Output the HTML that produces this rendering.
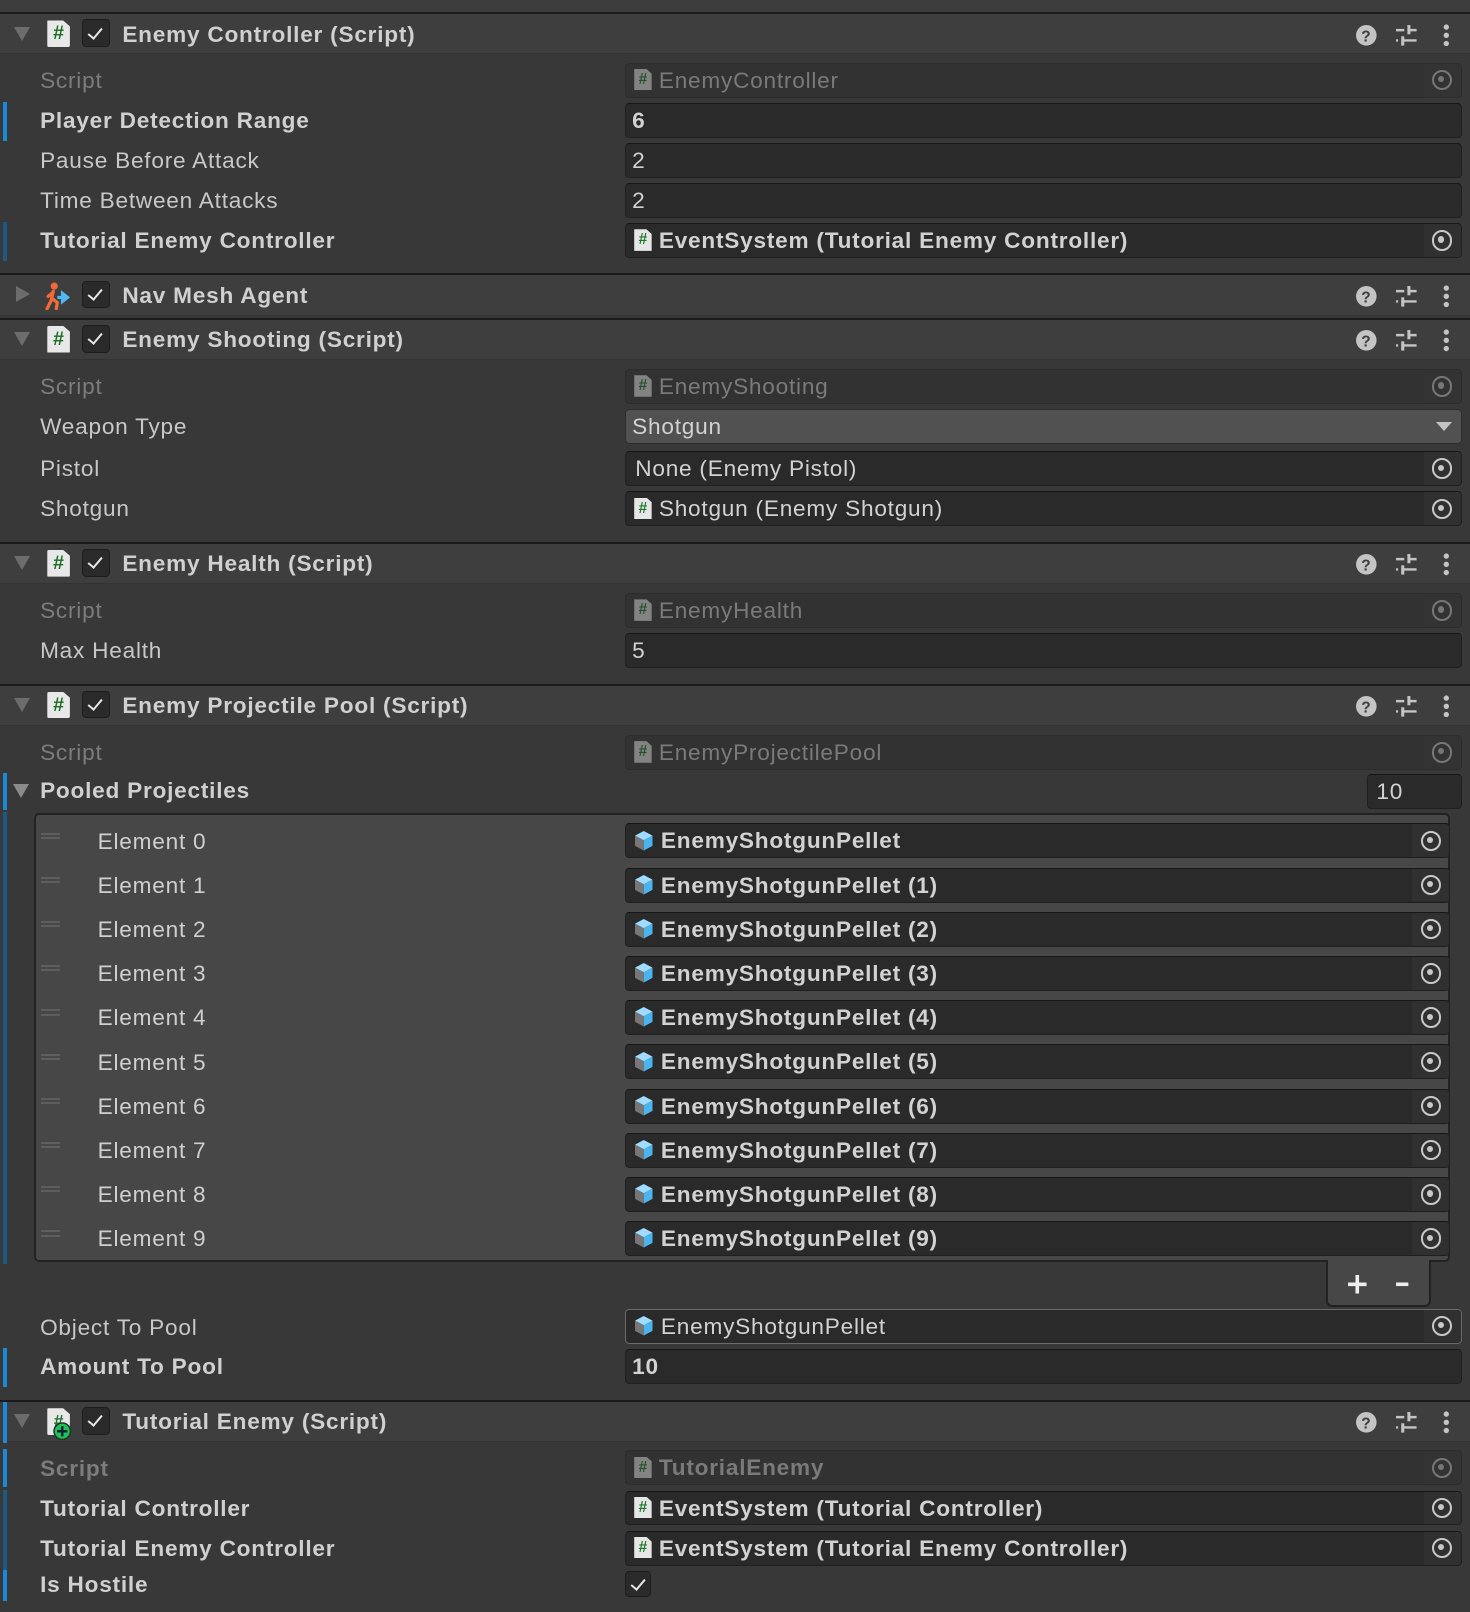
<!DOCTYPE html>
<html><head><meta charset="utf-8">
<style>
*{margin:0;padding:0;box-sizing:border-box}
html,body{width:1470px;height:1612px;overflow:hidden;background:#383838}
#w{zoom:1.02797;position:relative;width:1430px;height:1568px;background:#383838;font-family:"Liberation Sans",sans-serif;font-size:22px;color:#c8c8c8;letter-spacing:0.75px}
.top{position:absolute;left:0;top:0;width:1430px;height:12px;background:#3c3c3c}
.hdr{position:absolute;left:0;width:1430px;height:41px;background:#3e3e3e;border-top:2px solid #1b1b1b;border-bottom:1px solid #333}
.hdr .t{position:absolute;left:119px;top:7px;font-weight:bold;color:#d0d0d0;line-height:26px}
.hdr .tri{position:absolute;left:14px;top:12px;width:0;height:0;border-left:8px solid transparent;border-right:8px solid transparent;border-top:14px solid #6c6c6c}
.hdr .tri.r{left:16px;top:10px;border-top:8px solid transparent;border-bottom:8px solid transparent;border-left:14px solid #6c6c6c;border-right:0}
.hdr .ico{position:absolute;left:46px;top:6px;width:22px;height:26px;background:#e8e8e8;clip-path:polygon(0 0,70% 0,100% 22%,100% 100%,0 100%);color:#1b6e25;font-weight:bold;font-size:19px;text-align:center;line-height:27px;border-radius:2px;letter-spacing:0}
.cb{position:absolute;left:80px;top:5px;width:27px;height:27px;background:#2a2a2a;border:1px solid #1c1c1c;border-radius:4px}
.cb:after{content:"";position:absolute;left:8px;top:4px;width:6px;height:12px;border-right:2.5px solid #e6e6e6;border-bottom:2.5px solid #e6e6e6;transform:rotate(40deg)}
.hi{position:absolute;top:9px}
.l{position:absolute;left:39px;height:26px;line-height:28px;white-space:nowrap}
.l.b{font-weight:bold;color:#d0d0d0}
.l.d{color:#7c7c7c}
.bar{position:absolute;left:3px;width:4px;background:#1a8ad8}
.bar.dk{background:#1c5a86}
.f{position:absolute;left:608px;width:814px;height:34px;background:#2a2a2a;border:1px solid #1f1f1f;border-top-color:#171717;border-radius:4px;line-height:33px;padding-left:6px;color:#d2d2d2;white-space:nowrap;overflow:hidden}
.f.dis{background:#323232;border-color:#2c2c2c;color:#7a7a7a}
.f.nb{font-weight:bold}
.f.dd{background:#515151;border-color:#2d2d2d}
.f.dd:after{content:"";position:absolute;right:9px;top:12px;border-left:8px solid transparent;border-right:8px solid transparent;border-top:9px solid #c4c4c4}
.hs{display:inline-block;vertical-align:middle;width:17px;height:21px;margin:-4px 7px 0 2px;background:#e6e6e6;color:#1d7a28;font-style:normal;font-weight:bold;font-size:15px;line-height:22px;text-align:center;letter-spacing:0;clip-path:polygon(0 0,70% 0,100% 22%,100% 100%,0 100%)}
.dis .hs{opacity:.45}
.cube{display:inline-block;vertical-align:middle;margin:-4px 7px 0 2px;width:19px;height:21px}
.tg{position:absolute;right:0;top:0;width:36px;height:32px;background:#303030}
.tg:before{content:"";position:absolute;left:8px;top:6px;width:16px;height:16px;border:2px solid #c8c8c8;border-radius:50%}
.tg:after{content:"";position:absolute;left:14px;top:12px;width:6px;height:6px;background:#c8c8c8;border-radius:50%}
.dis .tg{background:#333}
.dis .tg:before{border-color:#777}.dis .tg:after{background:#777}
.list{position:absolute;left:33px;top:791px;width:1378px;height:437px;background:#474747;border:2px solid #222;border-radius:5px}
.foot{position:absolute;left:1290px;top:1226px;width:102px;height:45px;background:#474747;border:2px solid #222;border-top:none;border-radius:0 0 6px 6px}
.el{position:absolute;left:95px;height:26px;line-height:28px;color:#cfcfcf}
.grip{position:absolute;left:40px;width:18px;height:6px;border-top:2px solid #5e5e5e;border-bottom:2px solid #5e5e5e}
.ef{left:608px;width:803px}
</style></head><body><div id="w">
<div class="top"></div>

<div class="hdr" style="top:12px"><div class="tri"></div><div class="ico">#</div><div class="cb"></div><div class="t">Enemy Controller (Script)</div>
<svg class="hi" style="left:1318px" width="22" height="22" viewBox="0 0 22 22"><circle cx="11" cy="11" r="10" fill="#c4c4c4"/><text x="11" y="17" text-anchor="middle" font-family="Liberation Sans" font-weight="bold" font-size="15" fill="#3e3e3e">?</text></svg>
<svg class="hi" style="left:1357px" width="22" height="22" viewBox="0 0 22 22"><path d="M1 6h20M1 16h20" stroke="#c4c4c4" stroke-width="2.4"/><rect x="12" y="1" width="3" height="9" fill="#c4c4c4"/><rect x="6" y="12" width="3" height="9" fill="#c4c4c4"/><rect x="9" y="3" width="3" height="6" fill="#3e3e3e"/><rect x="3" y="13" width="3" height="5" fill="#3e3e3e"/></svg>
<svg class="hi" style="left:1396px" width="22" height="22" viewBox="0 0 22 22"><circle cx="11" cy="3" r="2.6" fill="#c4c4c4"/><circle cx="11" cy="11" r="2.6" fill="#c4c4c4"/><circle cx="11" cy="19" r="2.6" fill="#c4c4c4"/></svg></div>

<div class="l d" style="top:65px">Script</div><div class="f dis" style="top:61px"><i class="hs">#</i>EnemyController<b class="tg"></b></div>
<div class="bar" style="top:99px;height:38px"></div>
<div class="l b" style="top:104px">Player Detection Range</div><div class="f nb" style="top:100px">6</div>
<div class="l" style="top:143px">Pause Before Attack</div><div class="f" style="top:139px">2</div>
<div class="l" style="top:182px">Time Between Attacks</div><div class="f" style="top:178px">2</div>
<div class="bar dk" style="top:216px;height:38px"></div>
<div class="l b" style="top:221px">Tutorial Enemy Controller</div><div class="f nb" style="top:217px"><i class="hs">#</i>EventSystem (Tutorial Enemy Controller)<b class="tg"></b></div>

<div class="hdr" style="top:266px"><div class="tri r"></div>
<svg style="position:absolute;left:44px;top:6px" width="26" height="28" viewBox="0 0 26 28"><circle cx="9" cy="4" r="3.5" fill="#f06a3a"/><path d="M8 9 L6 18 L2 26 M7 16 L12 20 L11 26 M8 10 L3 14" stroke="#f06a3a" stroke-width="3.2" fill="none" stroke-linecap="round"/><path d="M12 15h8M17 11l5 4-5 4z" stroke="#4fb8f0" stroke-width="3" fill="#4fb8f0"/></svg>
<div class="cb"></div><div class="t">Nav Mesh Agent</div>
<svg class="hi" style="left:1318px" width="22" height="22" viewBox="0 0 22 22"><circle cx="11" cy="11" r="10" fill="#c4c4c4"/><text x="11" y="17" text-anchor="middle" font-family="Liberation Sans" font-weight="bold" font-size="15" fill="#3e3e3e">?</text></svg>
<svg class="hi" style="left:1357px" width="22" height="22" viewBox="0 0 22 22"><path d="M1 6h20M1 16h20" stroke="#c4c4c4" stroke-width="2.4"/><rect x="12" y="1" width="3" height="9" fill="#c4c4c4"/><rect x="6" y="12" width="3" height="9" fill="#c4c4c4"/><rect x="9" y="3" width="3" height="6" fill="#3e3e3e"/><rect x="3" y="13" width="3" height="5" fill="#3e3e3e"/></svg>
<svg class="hi" style="left:1396px" width="22" height="22" viewBox="0 0 22 22"><circle cx="11" cy="3" r="2.6" fill="#c4c4c4"/><circle cx="11" cy="11" r="2.6" fill="#c4c4c4"/><circle cx="11" cy="19" r="2.6" fill="#c4c4c4"/></svg></div>

<div class="hdr" style="top:309px"><div class="tri"></div><div class="ico">#</div><div class="cb"></div><div class="t">Enemy Shooting (Script)</div>
<svg class="hi" style="left:1318px" width="22" height="22" viewBox="0 0 22 22"><circle cx="11" cy="11" r="10" fill="#c4c4c4"/><text x="11" y="17" text-anchor="middle" font-family="Liberation Sans" font-weight="bold" font-size="15" fill="#3e3e3e">?</text></svg>
<svg class="hi" style="left:1357px" width="22" height="22" viewBox="0 0 22 22"><path d="M1 6h20M1 16h20" stroke="#c4c4c4" stroke-width="2.4"/><rect x="12" y="1" width="3" height="9" fill="#c4c4c4"/><rect x="6" y="12" width="3" height="9" fill="#c4c4c4"/><rect x="9" y="3" width="3" height="6" fill="#3e3e3e"/><rect x="3" y="13" width="3" height="5" fill="#3e3e3e"/></svg>
<svg class="hi" style="left:1396px" width="22" height="22" viewBox="0 0 22 22"><circle cx="11" cy="3" r="2.6" fill="#c4c4c4"/><circle cx="11" cy="11" r="2.6" fill="#c4c4c4"/><circle cx="11" cy="19" r="2.6" fill="#c4c4c4"/></svg></div>

<div class="l d" style="top:363px">Script</div><div class="f dis" style="top:359px"><i class="hs">#</i>EnemyShooting<b class="tg"></b></div>
<div class="l" style="top:402px">Weapon Type</div><div class="f dd" style="top:398px">Shotgun</div>
<div class="l" style="top:443px">Pistol</div><div class="f" style="top:439px;padding-left:9px">None (Enemy Pistol)<b class="tg"></b></div>
<div class="l" style="top:482px">Shotgun</div><div class="f" style="top:478px"><i class="hs">#</i>Shotgun (Enemy Shotgun)<b class="tg"></b></div>

<div class="hdr" style="top:527px"><div class="tri"></div><div class="ico">#</div><div class="cb"></div><div class="t">Enemy Health (Script)</div>
<svg class="hi" style="left:1318px" width="22" height="22" viewBox="0 0 22 22"><circle cx="11" cy="11" r="10" fill="#c4c4c4"/><text x="11" y="17" text-anchor="middle" font-family="Liberation Sans" font-weight="bold" font-size="15" fill="#3e3e3e">?</text></svg>
<svg class="hi" style="left:1357px" width="22" height="22" viewBox="0 0 22 22"><path d="M1 6h20M1 16h20" stroke="#c4c4c4" stroke-width="2.4"/><rect x="12" y="1" width="3" height="9" fill="#c4c4c4"/><rect x="6" y="12" width="3" height="9" fill="#c4c4c4"/><rect x="9" y="3" width="3" height="6" fill="#3e3e3e"/><rect x="3" y="13" width="3" height="5" fill="#3e3e3e"/></svg>
<svg class="hi" style="left:1396px" width="22" height="22" viewBox="0 0 22 22"><circle cx="11" cy="3" r="2.6" fill="#c4c4c4"/><circle cx="11" cy="11" r="2.6" fill="#c4c4c4"/><circle cx="11" cy="19" r="2.6" fill="#c4c4c4"/></svg></div>

<div class="l d" style="top:581px">Script</div><div class="f dis" style="top:577px"><i class="hs">#</i>EnemyHealth<b class="tg"></b></div>
<div class="l" style="top:620px">Max Health</div><div class="f" style="top:616px">5</div>

<div class="hdr" style="top:665px"><div class="tri"></div><div class="ico">#</div><div class="cb"></div><div class="t">Enemy Projectile Pool (Script)</div>
<svg class="hi" style="left:1318px" width="22" height="22" viewBox="0 0 22 22"><circle cx="11" cy="11" r="10" fill="#c4c4c4"/><text x="11" y="17" text-anchor="middle" font-family="Liberation Sans" font-weight="bold" font-size="15" fill="#3e3e3e">?</text></svg>
<svg class="hi" style="left:1357px" width="22" height="22" viewBox="0 0 22 22"><path d="M1 6h20M1 16h20" stroke="#c4c4c4" stroke-width="2.4"/><rect x="12" y="1" width="3" height="9" fill="#c4c4c4"/><rect x="6" y="12" width="3" height="9" fill="#c4c4c4"/><rect x="9" y="3" width="3" height="6" fill="#3e3e3e"/><rect x="3" y="13" width="3" height="5" fill="#3e3e3e"/></svg>
<svg class="hi" style="left:1396px" width="22" height="22" viewBox="0 0 22 22"><circle cx="11" cy="3" r="2.6" fill="#c4c4c4"/><circle cx="11" cy="11" r="2.6" fill="#c4c4c4"/><circle cx="11" cy="19" r="2.6" fill="#c4c4c4"/></svg></div>

<div class="l d" style="top:719px">Script</div><div class="f dis" style="top:715px"><i class="hs">#</i>EnemyProjectilePool<b class="tg"></b></div>
<div class="bar" style="top:752px;height:36px"></div>
<div style="position:absolute;left:13px;top:763px;border-left:8px solid transparent;border-right:8px solid transparent;border-top:14px solid #8a8a8a"></div>
<div class="l b" style="top:756px">Pooled Projectiles</div>
<div class="f" style="top:753px;left:1330px;width:92px;padding-left:8px">10</div>
<div class="bar dk" style="top:790px;height:440px"></div>
<div class="list"></div>

<div class="grip" style="top:810px"></div><div class="el" style="top:805px">Element 0</div>
<div class="f nb ef" style="top:801px"><svg class="cube" viewBox="0 0 19 21"><path d="M9.5 1L18 5.5 9.5 10 1 5.5z" fill="#9fdcff"/><path d="M1 5.5L9.5 10V20L1 15.5z" fill="#777"/><path d="M18 5.5V15.5L9.5 20V10z" fill="#4cb4ec"/></svg>EnemyShotgunPellet<b class="tg"></b></div>
<div class="grip" style="top:853px"></div><div class="el" style="top:848px">Element 1</div>
<div class="f nb ef" style="top:844px"><svg class="cube" viewBox="0 0 19 21"><path d="M9.5 1L18 5.5 9.5 10 1 5.5z" fill="#9fdcff"/><path d="M1 5.5L9.5 10V20L1 15.5z" fill="#777"/><path d="M18 5.5V15.5L9.5 20V10z" fill="#4cb4ec"/></svg>EnemyShotgunPellet (1)<b class="tg"></b></div>
<div class="grip" style="top:896px"></div><div class="el" style="top:891px">Element 2</div>
<div class="f nb ef" style="top:887px"><svg class="cube" viewBox="0 0 19 21"><path d="M9.5 1L18 5.5 9.5 10 1 5.5z" fill="#9fdcff"/><path d="M1 5.5L9.5 10V20L1 15.5z" fill="#777"/><path d="M18 5.5V15.5L9.5 20V10z" fill="#4cb4ec"/></svg>EnemyShotgunPellet (2)<b class="tg"></b></div>
<div class="grip" style="top:939px"></div><div class="el" style="top:934px">Element 3</div>
<div class="f nb ef" style="top:930px"><svg class="cube" viewBox="0 0 19 21"><path d="M9.5 1L18 5.5 9.5 10 1 5.5z" fill="#9fdcff"/><path d="M1 5.5L9.5 10V20L1 15.5z" fill="#777"/><path d="M18 5.5V15.5L9.5 20V10z" fill="#4cb4ec"/></svg>EnemyShotgunPellet (3)<b class="tg"></b></div>
<div class="grip" style="top:982px"></div><div class="el" style="top:977px">Element 4</div>
<div class="f nb ef" style="top:973px"><svg class="cube" viewBox="0 0 19 21"><path d="M9.5 1L18 5.5 9.5 10 1 5.5z" fill="#9fdcff"/><path d="M1 5.5L9.5 10V20L1 15.5z" fill="#777"/><path d="M18 5.5V15.5L9.5 20V10z" fill="#4cb4ec"/></svg>EnemyShotgunPellet (4)<b class="tg"></b></div>
<div class="grip" style="top:1025px"></div><div class="el" style="top:1020px">Element 5</div>
<div class="f nb ef" style="top:1016px"><svg class="cube" viewBox="0 0 19 21"><path d="M9.5 1L18 5.5 9.5 10 1 5.5z" fill="#9fdcff"/><path d="M1 5.5L9.5 10V20L1 15.5z" fill="#777"/><path d="M18 5.5V15.5L9.5 20V10z" fill="#4cb4ec"/></svg>EnemyShotgunPellet (5)<b class="tg"></b></div>
<div class="grip" style="top:1068px"></div><div class="el" style="top:1063px">Element 6</div>
<div class="f nb ef" style="top:1059px"><svg class="cube" viewBox="0 0 19 21"><path d="M9.5 1L18 5.5 9.5 10 1 5.5z" fill="#9fdcff"/><path d="M1 5.5L9.5 10V20L1 15.5z" fill="#777"/><path d="M18 5.5V15.5L9.5 20V10z" fill="#4cb4ec"/></svg>EnemyShotgunPellet (6)<b class="tg"></b></div>
<div class="grip" style="top:1111px"></div><div class="el" style="top:1106px">Element 7</div>
<div class="f nb ef" style="top:1102px"><svg class="cube" viewBox="0 0 19 21"><path d="M9.5 1L18 5.5 9.5 10 1 5.5z" fill="#9fdcff"/><path d="M1 5.5L9.5 10V20L1 15.5z" fill="#777"/><path d="M18 5.5V15.5L9.5 20V10z" fill="#4cb4ec"/></svg>EnemyShotgunPellet (7)<b class="tg"></b></div>
<div class="grip" style="top:1154px"></div><div class="el" style="top:1149px">Element 8</div>
<div class="f nb ef" style="top:1145px"><svg class="cube" viewBox="0 0 19 21"><path d="M9.5 1L18 5.5 9.5 10 1 5.5z" fill="#9fdcff"/><path d="M1 5.5L9.5 10V20L1 15.5z" fill="#777"/><path d="M18 5.5V15.5L9.5 20V10z" fill="#4cb4ec"/></svg>EnemyShotgunPellet (8)<b class="tg"></b></div>
<div class="grip" style="top:1197px"></div><div class="el" style="top:1192px">Element 9</div>
<div class="f nb ef" style="top:1188px"><svg class="cube" viewBox="0 0 19 21"><path d="M9.5 1L18 5.5 9.5 10 1 5.5z" fill="#9fdcff"/><path d="M1 5.5L9.5 10V20L1 15.5z" fill="#777"/><path d="M18 5.5V15.5L9.5 20V10z" fill="#4cb4ec"/></svg>EnemyShotgunPellet (9)<b class="tg"></b></div>

<div class="foot"><svg style="position:absolute;left:18px;top:13px" width="20" height="20" viewBox="0 0 20 20"><path d="M10 1v18M1 10h18" stroke="#eee" stroke-width="3.5"/></svg><svg style="position:absolute;left:64px;top:13px" width="16" height="20" viewBox="0 0 16 20"><path d="M2 10h12" stroke="#eee" stroke-width="3.5"/></svg></div>

<div class="l" style="top:1278px">Object To Pool</div>
<div class="f" style="top:1273px;border-color:#6a6a6a"><svg class="cube" viewBox="0 0 19 21"><path d="M9.5 1L18 5.5 9.5 10 1 5.5z" fill="#9fdcff"/><path d="M1 5.5L9.5 10V20L1 15.5z" fill="#777"/><path d="M18 5.5V15.5L9.5 20V10z" fill="#4cb4ec"/></svg>EnemyShotgunPellet<b class="tg"></b></div>
<div class="bar" style="top:1311px;height:38px"></div>
<div class="l b" style="top:1316px">Amount To Pool</div><div class="f nb" style="top:1312px">10</div>

<div class="hdr" style="top:1362px"><div class="tri"></div><div class="ico" style="font-size:17px">#</div>
<svg style="position:absolute;left:52px;top:19px" width="18" height="18" viewBox="0 0 18 18"><circle cx="9" cy="9" r="8" fill="#20c05a" stroke="#1b3a25" stroke-width="1.5"/><path d="M9 4v10M4 9h10" stroke="#123" stroke-width="2.4"/></svg>
<div class="cb"></div><div class="t">Tutorial Enemy (Script)</div>
<svg class="hi" style="left:1318px" width="22" height="22" viewBox="0 0 22 22"><circle cx="11" cy="11" r="10" fill="#c4c4c4"/><text x="11" y="17" text-anchor="middle" font-family="Liberation Sans" font-weight="bold" font-size="15" fill="#3e3e3e">?</text></svg>
<svg class="hi" style="left:1357px" width="22" height="22" viewBox="0 0 22 22"><path d="M1 6h20M1 16h20" stroke="#c4c4c4" stroke-width="2.4"/><rect x="12" y="1" width="3" height="9" fill="#c4c4c4"/><rect x="6" y="12" width="3" height="9" fill="#c4c4c4"/><rect x="9" y="3" width="3" height="6" fill="#3e3e3e"/><rect x="3" y="13" width="3" height="5" fill="#3e3e3e"/></svg>
<svg class="hi" style="left:1396px" width="22" height="22" viewBox="0 0 22 22"><circle cx="11" cy="3" r="2.6" fill="#c4c4c4"/><circle cx="11" cy="11" r="2.6" fill="#c4c4c4"/><circle cx="11" cy="19" r="2.6" fill="#c4c4c4"/></svg></div>
<div class="bar" style="top:1364px;height:40px"></div>

<div class="bar" style="top:1410px;height:37px"></div>
<div class="l d b" style="top:1415px;color:#7c7c7c">Script</div><div class="f dis nb" style="top:1411px"><i class="hs">#</i>TutorialEnemy<b class="tg"></b></div>
<div class="bar dk" style="top:1449px;height:78px"></div>
<div class="l b" style="top:1454px">Tutorial Controller</div><div class="f nb" style="top:1450px"><i class="hs">#</i>EventSystem (Tutorial Controller)<b class="tg"></b></div>
<div class="l b" style="top:1493px">Tutorial Enemy Controller</div><div class="f nb" style="top:1489px"><i class="hs">#</i>EventSystem (Tutorial Enemy Controller)<b class="tg"></b></div>
<div class="bar" style="top:1527px;height:30px"></div>
<div class="l b" style="top:1528px">Is Hostile</div>
<div class="cb" style="left:608px;top:1528px;width:25px;height:26px"></div>
</div></body></html>
